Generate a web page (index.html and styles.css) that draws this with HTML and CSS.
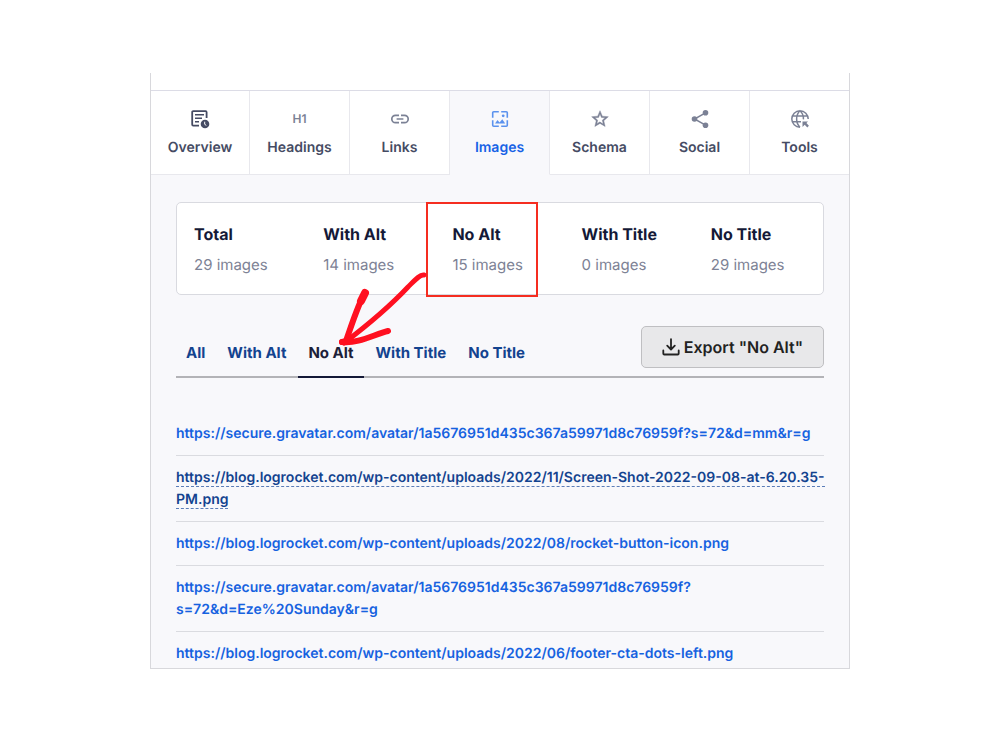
FILE: index.html
```html
<!DOCTYPE html>
<html lang="en">
<head>
<meta charset="utf-8">
<title>Images</title>
<link rel="stylesheet" href="styles.css">
</head>
<body>
<main class="panel">
  <nav class="tabs">
    <a class="tab tab-strong" href="#overview">
      <svg class="tab-icon" viewBox="0 0 20 20" fill="none" stroke="currentColor" stroke-width="1.8">
        <path d="M9 16.600H3.200A1 1 0 0 1 2.200 15.600V3.200A1 1 0 0 1 3.200 2.200H15.600A1 1 0 0 1 16.600 3.200V9"/>
        <path d="M5 5.800H14M5 9.300H12M5 12.700H9" stroke-width="1.500"/>
        <circle cx="15" cy="15" r="4.300" fill="currentColor" stroke="none"/>
        <path d="M14.700 12.700V15.300L16.300 16.400" stroke="#fff" stroke-width="1"/>
      </svg>
      Overview
    </a>
    <a class="tab" href="#headings"><span class="tab-icon h1-icon">H1</span>Headings</a>
    <a class="tab" href="#links">
      <svg class="tab-icon" viewBox="0 0 20 20" fill="none" stroke="currentColor" stroke-width="1.700">
        <path d="M9 6.300H5.500A3.700 3.700 0 0 0 5.500 13.700H9M11 6.300H14.500A3.700 3.700 0 0 1 14.500 13.700H11M6.600 10H13.400"/>
      </svg>
      Links
    </a>
    <a class="tab tab-active" href="#images" aria-current="page">
      <svg class="tab-icon" viewBox="0 0 20 20" fill="none" stroke="currentColor" stroke-width="1.600">
        <path d="M2.700 8.800V3.700A1 1 0 0 1 3.700 2.700H8.800M11.200 2.700H16.300A1 1 0 0 1 17.300 3.700V8.800M17.300 11.200V16.300A1 1 0 0 1 16.300 17.300H11.200M8.800 17.300H3.700A1 1 0 0 1 2.700 16.300V11.200"/>
        <circle cx="13.200" cy="6.800" r="1.400" fill="currentColor" stroke="none"/>
        <path d="M5 14.500L7.500 11L9.500 13.500L12.300 10.300L15.200 14.500Z" fill="currentColor" stroke="none"/>
      </svg>
      Images
    </a>
    <a class="tab" href="#schema">
      <svg class="tab-icon" viewBox="0 0 24 24" fill="currentColor" stroke="currentColor" stroke-width="0.500">
        <path d="M12 15.390L8.240 17.660L9.230 13.380L5.910 10.500L10.290 10.130L12 6.090L13.710 10.130L18.090 10.500L14.770 13.380L15.760 17.660M22 9.240L14.810 8.630L12 2L9.190 8.630L2 9.240L7.450 13.970L5.820 21L12 17.270L18.180 21L16.540 13.970Z"/>
      </svg>
      Schema
    </a>
    <a class="tab" href="#social">
      <svg class="tab-icon" viewBox="0 0 20 20" fill="currentColor">
        <path d="M15.500 3.800L4.500 10L15.500 16.200" fill="none" stroke="currentColor" stroke-width="1.500"/>
        <circle cx="15.500" cy="3.800" r="2.800"/><circle cx="4.500" cy="10" r="2.800"/><circle cx="15.500" cy="16.200" r="2.800"/>
      </svg>
      Social
    </a>
    <a class="tab" href="#tools">
      <svg class="tab-icon" viewBox="0 0 20 20" fill="none" stroke="currentColor" stroke-width="1.500">
        <path d="M10 18.200A8.200 8.200 0 1 1 18.200 10M2.500 7H17.500M2.500 12.800H11M10 18.200C5.500 14 5.500 6 10 1.800C12.500 4 13.600 7 13.400 10.400"/>
        <path d="M12.500 12.500H18L16.400 14.100L18.900 16.800L17.300 18.400L14.700 15.800L12.500 18Z" fill="currentColor" stroke="none"/>
      </svg>
      Tools
    </a>
  </nav>

  <div class="content">
    <section class="stats">
      <div class="stat"><h2>Total</h2><p>29 images</p></div>
      <div class="stat"><h2>With Alt</h2><p>14 images</p></div>
      <div class="stat stat-marked"><h2>No Alt</h2><p>15 images</p>
        <svg class="arrow" viewBox="0 0 96 84" fill="none" stroke="#ff1020" stroke-linecap="round" stroke-linejoin="round">
          <path d="M90 8C86 7 80 14 74 20C58 37 39 54 10 76" stroke-width="5"/>
          <path d="M31 26C25 35 20 51 12 74" stroke-width="6"/>
          <path d="M31 26L27 34" stroke-width="8"/>
          <path d="M54 64C41 67 24 77 8 75" stroke-width="6"/>
          <path d="M8 75L17 73" stroke-width="6"/>
        </svg>
      </div>
      <div class="stat"><h2>With Title</h2><p>0 images</p></div>
      <div class="stat"><h2>No Title</h2><p>29 images</p></div>
    </section>

    <div class="toolbar">
      <div class="filters">
        <button class="filter" type="button">All</button>
        <button class="filter" type="button">With Alt</button>
        <button class="filter filter-active" type="button">No Alt</button>
        <button class="filter" type="button">With Title</button>
        <button class="filter" type="button">No Title</button>
      </div>
      <button class="export" type="button">
        <svg class="export-icon" viewBox="0 0 18 18" fill="none" stroke="currentColor" stroke-width="1.800" stroke-linecap="round" stroke-linejoin="round">
          <path d="M9 1.200V11M5.200 7.700L9 11.500L12.800 7.700M1.300 12.500V15.500A1 1 0 0 0 2.300 16.500H15.700A1 1 0 0 0 16.700 15.500V12.500"/>
        </svg>
        Export "No Alt"
      </button>
    </div>

    <ul class="urls">
      <li><a href="#1">https://secure.gravatar.com/avatar/1a5676951d435c367a59971d8c76959f?s=72&amp;d=mm&amp;r=g</a></li>
      <li><a class="url-hover" href="#2">https://blog.logrocket.com/wp-content/uploads/2022/11/Screen-Shot-2022-09-08-at-6.20.35-<br>PM.png</a></li>
      <li><a href="#3">https://blog.logrocket.com/wp-content/uploads/2022/08/rocket-button-icon.png</a></li>
      <li><a href="#4">https://secure.gravatar.com/avatar/1a5676951d435c367a59971d8c76959f?<br>s=72&amp;d=Eze%20Sunday&amp;r=g</a></li>
      <li><a href="#5">https://blog.logrocket.com/wp-content/uploads/2022/06/footer-cta-dots-left.png</a></li>
    </ul>
  </div>
</main>
</body>
</html>
```
FILE: styles.css
```css
* { box-sizing: border-box; }

body {
  margin: 0;
  padding: 73px 15% 80px;
  background: #fff;
  font-family: Inter, "Liberation Sans", sans-serif;
  text-rendering: geometricPrecision;
}

.panel {
  padding-top: 17px;
  border: 1px solid #d8d8dc;
  border-top: 0;
}

.tabs {
  display: grid;
  grid-template-columns: 99fr repeat(5, 100fr) 99fr;
  border-top: 1px solid #dcdce6;
}

.tab {
  display: flex;
  flex-direction: column;
  align-items: center;
  gap: 9px;
  padding: 18px 0 16px;
  border-right: 1px solid #e8e8ed;
  border-bottom: 1px solid #e8e8ed;
  color: #454b63;
  font-size: 14px;
  font-weight: 600;
  line-height: 20px;
  text-decoration: none;
}

.tab:last-child { border-right: 0; }

.tab-active {
  background: #f8f8fb;
  border-bottom-color: #f8f8fb;
  color: #1662e6;
}

.tab-icon {
  width: 20px;
  height: 20px;
  color: #7b8195;
}

.tab-strong .tab-icon { color: #454b63; }
.tab-active .tab-icon { color: #5b92ee; }

.h1-icon {
  font-size: 12px;
  font-weight: 600;
  text-align: center;
}

.content {
  padding: 27px 25px 3px;
  background: #f8f8fb;
}

.stats {
  display: grid;
  grid-template-columns: repeat(5, 1fr);
  border: 1px solid #d9dae0;
  border-radius: 5px;
  background: #fff;
}

.stat {
  position: relative;
  padding: 20px 0 18px 17px;
}

.stat h2 {
  margin: 0;
  color: #141937;
  font-size: 16px;
  font-weight: 700;
  line-height: 22px;
}

.stat p {
  margin: 9px 0 0;
  color: #7d8295;
  font-size: 15px;
  line-height: 22px;
}

.stat-marked::before {
  content: "";
  position: absolute;
  inset: -1px 27px -3px -9px;
  border: 2px solid #f52d20;
}

.arrow {
  position: absolute;
  left: -101px;
  top: 64px;
  z-index: 1;
  width: 96px;
  height: 84px;
  pointer-events: none;
}

.toolbar {
  display: flex;
  justify-content: space-between;
  align-items: flex-end;
  margin-top: 31px;
  border-bottom: 2px solid #b3b3b7;
}

.filters {
  display: flex;
  gap: 2px;
  margin-bottom: -2px;
}

.filter {
  padding: 0 10px 11px;
  border: 0;
  border-bottom: 2px solid transparent;
  background: none;
  color: #13438f;
  font: 700 15px/24px Inter, "Liberation Sans", sans-serif;
  text-rendering: inherit;
}

.filter-active {
  border-bottom-color: #141937;
  color: #1c2038;
}

.export {
  display: flex;
  align-items: center;
  gap: 4px;
  margin-bottom: 8px;
  padding: 8px 20px;
  border: 1px solid #bfbfc2;
  border-radius: 5px;
  background: #e8e8ea;
  color: #222;
  font: 600 16px/24px Inter, "Liberation Sans", sans-serif;
  text-rendering: inherit;
}

.export-icon {
  width: 18px;
  height: 18px;
}

.urls {
  margin: 34px 0 0;
  padding: 0;
  list-style: none;
}

.urls li {
  padding: 11px 0 10px;
  border-bottom: 1px solid #dadbe0;
  font-size: 14px;
  font-weight: 600;
  line-height: 22px;
  white-space: nowrap;
}

.urls li:last-child {
  padding-bottom: 0;
  border-bottom: 0;
}

.urls a {
  color: #1662e0;
  text-decoration: none;
}

.urls .url-hover {
  border-bottom: 1px dashed #5b7db8;
  color: #13438f;
}
```
